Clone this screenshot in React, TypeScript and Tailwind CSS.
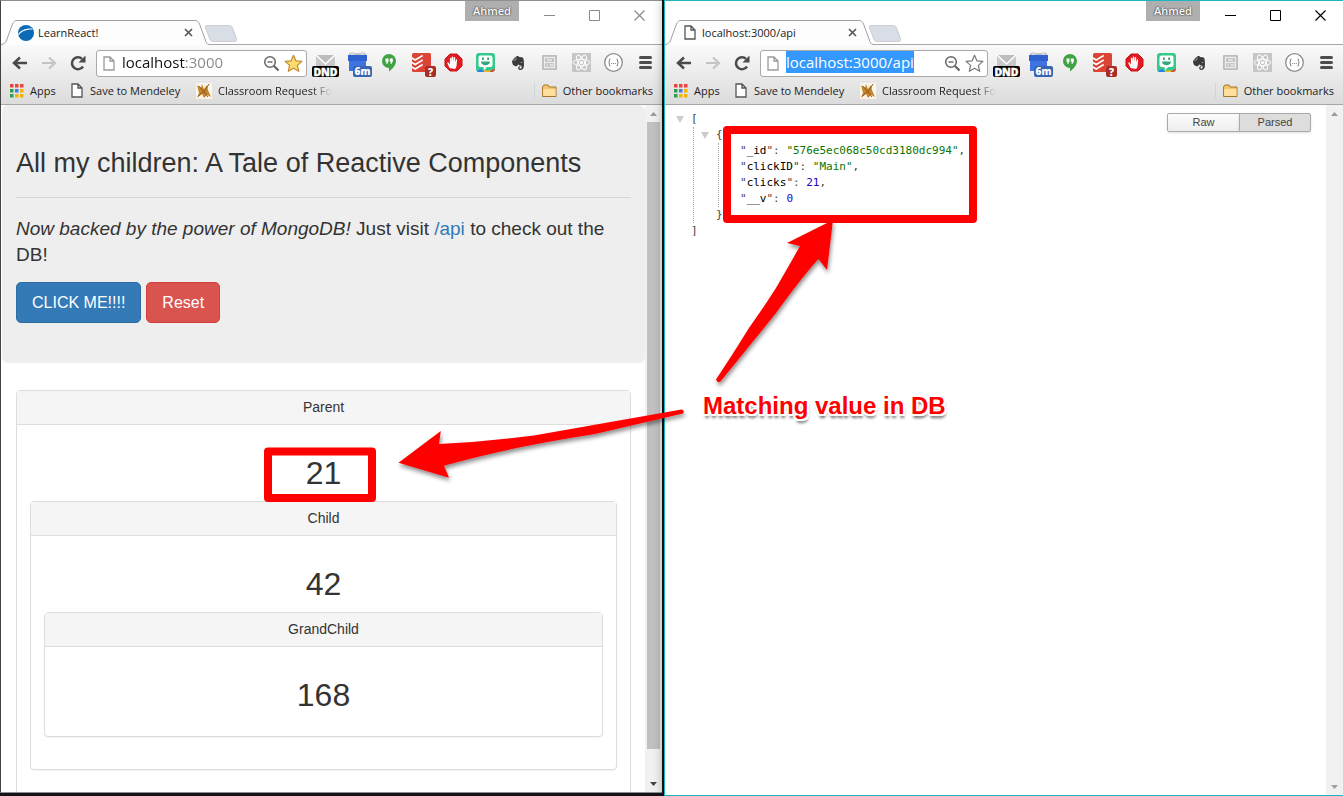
import React from "react";
import { FaEvernote } from "react-icons/fa";

const uiFont = "font-['Open_Sans','Noto_Sans',sans-serif]";
const pageFont = "font-['Liberation_Sans',Arial,sans-serif]";

function PageIcon({ light = false }: { light?: boolean }) {
  return (
    <svg width="12" height="15" viewBox="0 0 12 15" className="shrink-0" aria-hidden="true">
      <path
        d="M1 1h6l4 4v9H1z M7 1v4h4"
        fill="#fff"
        stroke={light ? "#9a9a9a" : "#555"}
        strokeWidth="1.3"
      />
    </svg>
  );
}

function SiteIcon() {
  return (
    <svg width="16" height="16" viewBox="0 0 16 16" className="shrink-0" aria-hidden="true">
      <circle cx="8" cy="8" r="8" fill="#0b6ab5" />
      <path d="M.5 10.500C3 6.500 8 4.200 14.500 4.500L13.800 3.600C8 3 3 5.200 .2 9z" fill="#fff" />
    </svg>
  );
}

function TitleBar({
  title,
  icon,
  active,
}: {
  title: string;
  icon: React.ReactNode;
  active: boolean;
}) {
  const stroke = active ? "#000" : "#8a8a8a";
  return (
    <header className="flex h-11 shrink-0 items-end border-b border-[#a6a6a6] bg-white">
      <div className="relative -mb-px flex h-[25px] w-[208px] shrink-0 items-center">
        <svg
          className="absolute inset-0"
          width="208"
          height="25"
          viewBox="0 0 208 25"
          aria-hidden="true"
        >
          <path
            d="M0 24.500C4 24 5 22 6 19L11.500 4C12.500 1.500 14 .5 16 .5H194C196 .5 197.500 1.500 198.500 4L204 19C205 22 205.500 24 208 24.500V25H0z"
            fill="#fdfdfd"
          />
          <path
            d="M0 24.500C4 24 5 22 6 19L11.500 4C12.500 1.500 14 .5 16 .5H194C196 .5 197.500 1.500 198.500 4L204 19C205 22 205.500 24 208 24.500"
            fill="none"
            stroke="#a0a0a0"
          />
        </svg>
        <div className="relative flex w-full items-center pr-3 pl-3.5">
          <span className="mr-px flex w-[22px] items-center justify-center">{icon}</span>
          <span className="flex-1 text-[11px] leading-4 whitespace-nowrap text-[#222]">
            {title}
          </span>
          <button aria-label="Close tab" className="p-1">
            <svg width="9" height="9" viewBox="0 0 9 9">
              <path d="M1 1l7 7M8 1l-7 7" stroke="#555" strokeWidth="1.600" />
            </svg>
          </button>
        </div>
      </div>
      <button aria-label="New tab" className="mb-0.5 -ml-[5px]">
        <svg width="34" height="17" viewBox="0 0 34 17">
          <path
            d="M2.500 .5H25C27 .5 28 1.500 28.500 3L32.500 13.500C33 15.500 32 16.500 30.500 16.500H9C7.500 16.500 6.500 15.500 6 14.500L1.500 3C1 1.500 1 .5 2.500 .5z"
            fill="#d8dde6"
            stroke="#cbcdd2"
          />
        </svg>
      </button>
      <div className="ml-auto flex items-start self-start pr-[7px]">
        <button className="h-5 w-[54px] bg-[#afafaf] text-[11px] leading-5 font-semibold text-white [text-shadow:0_0_2px_#333,0_0_1px_#333]">
          Ahmed
        </button>
        <button aria-label="Minimize" className="flex h-7 w-[46px] items-center justify-center pl-3.5">
          <svg width="11" height="11" viewBox="0 0 11 11">
            <path d="M0 5.500h11" stroke={stroke} />
          </svg>
        </button>
        <button aria-label="Maximize" className="flex h-7 w-[45px] items-center justify-center pl-3.5">
          <svg width="11" height="11" viewBox="0 0 11 11">
            <path d="M.5 .5h10v10H.5z" fill="none" stroke={stroke} />
          </svg>
        </button>
        <button aria-label="Close" className="flex h-7 w-[45px] items-center justify-center pl-3.5">
          <svg width="11" height="11" viewBox="0 0 11 11">
            <path d="M.5 .5l10 10M10.500 .5l-10 10" stroke={stroke} strokeWidth="1.200" />
          </svg>
        </button>
      </div>
    </header>
  );
}

const badgeText = {
  fill: "#fff",
  fontWeight: 900,
  fontFamily: "'Open Sans', sans-serif",
  textAnchor: "middle" as const,
};

const extensions: { name: string; art: React.ReactNode }[] = [
  {
    name: "Do not disturb",
    art: (
      <>
        <path d="M7 8h19v12H7z" fill="#c9c9c9" />
        <path d="M7 8l9.500 9L26 8" fill="#bdbdbd" stroke="#fff" strokeWidth="1.600" />
        <rect x="3" y="19" width="27" height="11" rx="2" fill="#000" />
        <text x="16.500" y="28.500" fontSize="10.500" stroke="#fff" strokeWidth=".4" {...badgeText}>
          DND
        </text>
      </>
    ),
  },
  {
    name: "Calendar",
    art: (
      <>
        <path d="M8 6h17v3H8z" fill="#bfc3ca" />
        <path d="M10 5h3v3h-3zM20 5h3v3h-3z" fill="#d8d8d8" />
        <path d="M7 8h19v6H7z" fill="#2f62d0" />
        <path d="M8 14h17v10H8z" fill="#3f74e0" />
        <rect x="12" y="19" width="19" height="11" rx="2" fill="#3765b3" />
        <text x="21.500" y="28" fontSize="10" {...badgeText}>
          6m
        </text>
      </>
    ),
  },
  {
    name: "Hangouts",
    art: (
      <>
        <path d="M16 7a7 7 0 0 1 7 7c0 4-3.500 8-7 10.500V21a7 7 0 0 1 0-14z" fill="#41a343" />
        <path
          d="M12.500 11.500h3v3l-1.200 2.200h-1.300l.7-2h-1.200zM16.800 11.500h3v3l-1.200 2.200h-1.300l.7-2h-1.200z"
          fill="#fff"
        />
      </>
    ),
  },
  {
    name: "Todoist",
    art: (
      <>
        <rect x="7" y="6" width="19" height="19" rx="1.500" fill="#dc4436" />
        <path
          d="M7 11l3.200 2 7.500-4.500M7 15.500l3.200 2 7.500-4.500M7 20l3.200 2 7.500-4.500"
          fill="none"
          stroke="#fff"
          strokeWidth="1.500"
        />
        <rect x="20" y="19" width="11" height="11" rx="2" fill="#a92c25" />
        <text x="25.500" y="28.500" fontSize="10" {...badgeText}>
          ?
        </text>
      </>
    ),
  },
  {
    name: "AdBlock",
    art: (
      <>
        <path d="M13 7h7l5 5v7l-5 5h-7l-5-5v-7z" fill="#e01b22" stroke="#c7141b" />
        <path
          d="M12.600 21c-.8-1.600-1.800-3.300-2.300-5 0-.8 1.100-.9 1.500-.1l1.100 1.900v-6.300c0-.9 1.300-.9 1.400 0l.2 3.500.2-4.900c0-.9 1.400-.9 1.500 0l.1 4.900.5-4.400c.1-.8 1.400-.7 1.400.1l-.1 4.700.8-2.700c.3-.8 1.300-.5 1.200.3l-.5 5.500c-.2 1.600-.8 2.500-1.500 3.500z"
          fill="#fff"
        />
      </>
    ),
  },
  {
    name: "Bitmoji",
    art: (
      <>
        <rect x="7" y="6" width="19" height="19" rx="3" fill="#35c98c" />
        <path d="M8 24l4-2 3 3H9z" fill="#2d7bf0" />
        <path d="M15 23.500h6L23 25h-8z" fill="#f7b916" />
        <path d="M21 24l4.800-2.500V23L24 25h-3z" fill="#e34b37" />
        <path
          d="M11.500 8.500h10a2 2 0 0 1 2 2v7.500a2 2 0 0 1-2 2h-3.500l-3 3.500-.5-3.500h-3a2 2 0 0 1-2-2v-7.500a2 2 0 0 1 2-2z"
          fill="#fff"
        />
        <path
          d="M12 14.500h9c0 5-9 5-9 0zM13 10.500h1.800v2.500H13zM18.200 10.500H20v2.500h-1.800z"
          fill="#35a877"
        />
      </>
    ),
  },
  {
    name: "Evernote",
    art: <FaEvernote x={9} y={8} width={15} height={15} color="#3b3b3b" />,
  },
  {
    name: "Reader",
    art: (
      <>
        <rect x="9" y="8" width="15" height="15" rx="1" fill="#bdbdbd" />
        <path
          d="M11.500 10.500h10v10h-10zM11.500 15.500h10M14 13h5M13.500 18h1.500M16.500 18h4"
          fill="none"
          stroke="#ececec"
          strokeWidth="1.300"
        />
      </>
    ),
  },
  {
    name: "React Developer Tools",
    art: (
      <>
        <rect x="7" y="6" width="19" height="19" fill="#c6c6c6" />
        <g fill="none" stroke="#fff" strokeWidth="1">
          <ellipse cx="16.500" cy="15.500" rx="8.300" ry="3.200" />
          <ellipse cx="16.500" cy="15.500" rx="8.300" ry="3.200" transform="rotate(60 16.500 15.500)" />
          <ellipse cx="16.500" cy="15.500" rx="8.300" ry="3.200" transform="rotate(120 16.500 15.500)" />
        </g>
        <circle cx="16.500" cy="15.500" r="1.600" fill="#fff" />
      </>
    ),
  },
  {
    name: "JSON Formatter",
    art: (
      <>
        <circle cx="16.500" cy="15.500" r="8.800" fill="#fff" stroke="#8c8c8c" strokeWidth="1.300" />
        <path
          d="M13.500 12c-1.500 0-1 1-1 2s-.4 1.500-1.300 1.500c.9 0 1.300.5 1.300 1.500s-.5 2 1 2M19.500 12c1.500 0 1 1 1 2s.4 1.500 1.300 1.500c-.9 0-1.300.5-1.300 1.500s.5 2-1 2M14.200 16.500h1M16 16.500h1M17.800 16.500h1"
          fill="none"
          stroke="#8c8c8c"
          strokeWidth="1.100"
        />
      </>
    ),
  },
  {
    name: "Menu",
    art: (
      <path
        d="M11.500 10.500h10M11.500 15.500h10M11.500 20.500h10"
        stroke="#4d4d4d"
        strokeWidth="3"
        strokeLinecap="round"
      />
    ),
  },
];

function Toolbar({ url, selected = false }: { url: string; selected?: boolean }) {
  return (
    <div className="flex h-9 items-center pl-[7px]">
      <button aria-label="Back" className="flex w-6 justify-center">
        <svg width="16" height="14" viewBox="0 0 16 14">
          <path d="M8 1.500L2 7l6 5.500M2.500 7H15" fill="none" stroke="#4a4a4a" strokeWidth="2.500" />
        </svg>
      </button>
      <button aria-label="Forward" className="ml-[5px] flex w-6 justify-center">
        <svg width="16" height="14" viewBox="0 0 16 14">
          <path d="M8 1.500L14 7l-6 5.500M13.500 7H1" fill="none" stroke="#c4c4c4" strokeWidth="2.200" />
        </svg>
      </button>
      <button aria-label="Reload" className="ml-[5px] flex w-6 justify-center">
        <svg width="16" height="16" viewBox="0 0 16 16">
          <path d="M13 11.500A6 6 0 1 1 12 3.800" fill="none" stroke="#4a4a4a" strokeWidth="2.500" />
          <path d="M15.500 .5v7h-7z" fill="#4a4a4a" />
        </svg>
      </button>
      <div className="ml-1.5 flex h-[27px] min-w-0 flex-1 items-center rounded-[3px] border border-[#a9a9a9] bg-white pr-[3px] pl-1.5">
        <PageIcon light />
        <div className="ml-[7px] flex min-w-0 flex-1 pb-0.5">
          {selected ? (
            <input
              aria-label="Address"
              defaultValue={url}
              className="field-sizing-content h-[22px] bg-[#3399ff] text-[15px] leading-5 text-white outline-none"
            />
          ) : (
            <input
              aria-label="Address"
              defaultValue={url}
              className="h-[22px] w-full min-w-0 bg-[linear-gradient(90deg,#111_64px,#888_64px)] bg-clip-text text-[15px] leading-5 text-transparent outline-none"
            />
          )}
        </div>
        <button aria-label="Zoom">
          <svg width="17" height="17" viewBox="0 0 17 17">
            <circle cx="7" cy="7" r="5.300" fill="none" stroke="#666" strokeWidth="1.500" />
            <path d="M4.500 7h5" stroke="#666" strokeWidth="1.400" />
            <path d="M11 11l4.500 4.500" stroke="#666" strokeWidth="2.300" />
          </svg>
        </button>
        <button aria-label="Bookmark this page" className="ml-1">
          <svg width="19" height="19" viewBox="0 0 19 19">
            <path
              d="M9.500 1.300l2.400 5.500 6 .6-4.500 4 1.300 5.900-5.200-3-5.200 3 1.300-5.900-4.500-4 6-.6z"
              fill={selected ? "#fff" : "#fddc6c"}
              stroke={selected ? "#777" : "#c08b35"}
              strokeWidth="1.200"
              strokeLinejoin="round"
            />
          </svg>
        </button>
      </div>
      <div className="ml-0.5 flex shrink-0 pr-px">
        {extensions.map((e) => (
          <button key={e.name} aria-label={e.name} className="size-8">
            <svg width="32" height="32" viewBox="0 0 32 32">
              {e.art}
            </svg>
          </button>
        ))}
      </div>
    </div>
  );
}

const appColors = [
  "#e8453c",
  "#e8453c",
  "#e8453c",
  "#2e9e4f",
  "#3b7ded",
  "#f5b400",
  "#2e9e4f",
  "#f5b400",
  "#f5b400",
];

function BookmarksBar() {
  return (
    <nav
      aria-label="Bookmarks"
      className="flex h-[23px] items-center pr-[9px] pb-1 pl-2 text-[11px] leading-4 text-[#1c1c1c]"
    >
      <a href="#apps" className="flex items-center gap-1.5">
        <svg width="15" height="15" viewBox="0 0 15 15" aria-hidden="true">
          {appColors.map((c, i) => (
            <rect
              key={i}
              x={1 + (i % 3) * 5}
              y={1 + Math.floor(i / 3) * 5}
              width="3.500"
              height="3.500"
              fill={c}
            />
          ))}
        </svg>
        <span className="w-[30px]">Apps</span>
      </a>
      <a href="#mendeley" className="ml-[11px] flex items-center gap-[7px]">
        <PageIcon />
        <span className="w-[95px] whitespace-nowrap">Save to Mendeley</span>
      </a>
      <a href="#classroom" className="ml-[11px] flex items-center gap-1.5">
        <svg width="16" height="16" viewBox="0 0 16 16" aria-hidden="true">
          <path d="M0 0h16v16H0z" fill="#fbf6ec" />
          <path d="M1 2l4 3 1-4 2 5 3-4 1 5 3 7-4-2-3 3-2-4-5 4 2-5z" fill="#c8862c" />
          <path d="M3 3l9 11M13 1L8 9M2 13l5-4" stroke="#8c5a1e" strokeWidth="1" />
        </svg>
        <span className="whitespace-nowrap [mask-image:linear-gradient(90deg,#000_82%,transparent)]">
          Classroom Request Fo
        </span>
      </a>
      <a
        href="#other"
        className="ml-auto flex items-center gap-1.5 border-l border-[#cfd4d8] pl-[7px] whitespace-nowrap"
      >
        <svg width="15" height="14" viewBox="0 0 15 14" aria-hidden="true">
          <path d="M.6 12.500V2.500L2 1h4l1.200 2H14v9.500z" fill="#f3c46c" stroke="#a8742a" />
          <path d="M1.200 5h12.300v7H1.200z" fill="#ffdf9e" />
        </svg>
        <span>Other bookmarks</span>
      </a>
    </nav>
  );
}

function Chrome({
  title,
  icon,
  url,
  active = false,
}: {
  title: string;
  icon: React.ReactNode;
  url: string;
  active?: boolean;
}) {
  return (
    <div className={`${uiFont} shrink-0`}>
      <TitleBar title={title} icon={icon} active={active} />
      <div className="border-b border-[#a6a6a6] bg-linear-to-b from-[#fafafa] to-[#dcdcdc]">
        <Toolbar url={url} selected={active} />
        <BookmarksBar />
      </div>
    </div>
  );
}

function Scrollbar({ thumb = false }: { thumb?: boolean }) {
  return (
    <div aria-hidden="true" className="flex w-[17px] shrink-0 flex-col items-center bg-[#f1f1f1]">
      <svg width="17" height="17" viewBox="0 0 17 17" className="shrink-0">
        <path d="M5 11h7L8.500 7z" fill="#9a9a9a" />
      </svg>
      <div className="flex min-h-0 w-full flex-1 flex-col px-0.5">
        {thumb && <div className="h-[96%] bg-[#c1c1c1]" />}
      </div>
      <svg width="17" height="17" viewBox="0 0 17 17" className="shrink-0">
        <path d="M5 7h7l-3.500 4z" fill={thumb ? "#444" : "#a0a0a0"} />
      </svg>
    </div>
  );
}

function Panel({
  title,
  value,
  children,
}: {
  title: string;
  value: number;
  children?: React.ReactNode;
}) {
  return (
    <section className="rounded-[4px] border border-[#ddd] bg-white text-center shadow-[0_1px_1px_rgba(0,0,0,0.05)]">
      <h3 className="border-b border-[#ddd] bg-[#f5f5f5] py-1.5 text-sm leading-[21px]">{title}</h3>
      <div className={`px-[13px] pt-[30px] ${children ? "pb-8" : "pb-[23px]"}`}>
        <p className={`text-[32px] leading-9 ${children ? "mb-2.5" : ""}`}>{value}</p>
        {children}
      </div>
    </section>
  );
}

function LearnReact() {
  return (
    <main className={`${pageFont} min-w-0 flex-1 overflow-hidden text-[#333]`}>
      <div className="rounded-md bg-[#eee] px-3.5 pt-[43px] pb-10">
        <h1 className="text-[27px] leading-[30px]">All my children: A Tale of Reactive Components</h1>
        <hr className="mt-[19px] mb-[18px] border-[#d5d5d5]" />
        <p className="text-[19px] leading-[26px]">
          <em>Now backed by the power of MongoDB!</em> Just visit{" "}
          <a href="/api" className="text-[#337ab7]">
            /api
          </a>{" "}
          to check out the DB!
        </p>
        <div className="mt-3.5 flex gap-[5px] text-base leading-[21px] text-white">
          <button className="rounded-[5px] border border-[#2e6da4] bg-[#337ab7] px-[15px] py-[9px]">
            CLICK ME!!!!
          </button>
          <button className="rounded-[5px] border border-[#d43f3a] bg-[#d9534f] px-[15px] py-[9px]">
            Reset
          </button>
        </div>
      </div>
      <div className="px-3.5 pt-[27px]">
        <Panel title="Parent" value={21}>
          <Panel title="Child" value={42}>
            <Panel title="GrandChild" value={168} />
          </Panel>
        </Panel>
      </div>
    </main>
  );
}

function Toggle() {
  return (
    <button aria-label="Collapse" className="absolute top-[5px] -left-[15px]">
      <svg width="8" height="7" viewBox="0 0 8 7">
        <path d="M0 0h8L4 7z" fill="#ccc" />
      </svg>
    </button>
  );
}

const fields: { key: string; value: string; tone: string }[] = [
  { key: "_id", value: '"576e5ec068c50cd3180dc994"', tone: "text-[#0b7500]" },
  { key: "clickID", value: '"Main"', tone: "text-[#0b7500]" },
  { key: "clicks", value: "21", tone: "text-[#1a01cc]" },
  { key: "__v", value: "0", tone: "text-[#1a01cc]" },
];

function ApiResponse() {
  return (
    <main className="flex min-w-0 flex-1 items-start justify-between bg-white pr-[15px]">
      <div className="pt-1.5 pl-[26px] font-['DejaVu_Sans_Mono',monospace] text-[11px] leading-4 text-[#444]">
        <div className="relative">
          <Toggle />[
        </div>
        <div className="ml-0.5 border-l border-dotted border-[#aaa] pl-[22px]">
          <div className="relative">
            <Toggle />
            {"{"}
          </div>
          <ul className="ml-0.5 border-l border-dotted border-[#aaa] pl-[21px]">
            {fields.map((f, i) => (
              <li key={f.key}>
                "<span className="text-black">{f.key}</span>": <span className={f.tone}>{f.value}</span>
                {i < fields.length - 1 && ","}
              </li>
            ))}
          </ul>
          <div>{"}"}</div>
        </div>
        <div>]</div>
      </div>
      <div className={`${pageFont} mt-2 flex text-[11px] leading-[17px] text-[#444]`}>
        <button className="w-[73px] rounded-l-[2px] border border-[#aaa] bg-linear-to-b from-[#fbfbfb] to-[#eee] shadow-sm">
          Raw
        </button>
        <button className="-ml-px w-[72px] rounded-r-[2px] border border-[#aaa] bg-[#ddd] shadow-sm">
          Parsed
        </button>
      </div>
    </main>
  );
}

function Annotations() {
  return (
    <div className="pointer-events-none absolute inset-0 z-20">
      <svg
        width="1343"
        height="796"
        viewBox="0 0 1343 796"
        className="absolute top-0 left-0"
        aria-hidden="true"
      >
        <defs>
          <filter id="drop" x="-10%" y="-10%" width="120%" height="120%">
            <feDropShadow dx="1" dy="3" stdDeviation="2" floodColor="#000" floodOpacity=".45" />
          </filter>
        </defs>
        <g fill="none" stroke="#f00" strokeWidth="8" strokeLinejoin="round">
          <rect x="727" y="130" width="246" height="89" />
          <rect x="268" y="451.500" width="104" height="46.500" />
        </g>
        <g fill="#f00" filter="url(#drop)">
          <path d="M833 220L827 270L818.500 259Q802 277 776 313L720.500 381.500Q717.500 383.500 716 379.500Q733 354 749 328Q764 307 776 288Q790 264 800 246L787 243z" />
          <path d="M398.500 462.700L440.800 431L439 444Q486 441.500 534 435.500L681.500 409.500Q685 410.500 683 413.500L595 434Q510 447 444 465.700L449 477.700z" />
        </g>
      </svg>
      <p className="absolute top-[392px] left-[703px] font-['Liberation_Sans',Arial,sans-serif] text-2xl leading-7 font-bold whitespace-nowrap text-[#f00] [text-shadow:-2px_0_0_#fff,2px_0_0_#fff,0_-2px_0_#fff,0_2px_0_#fff,-1px_-1px_0_#fff,1px_-1px_0_#fff,-1px_2px_0_#fff,2px_2px_0_#fff,1px_4px_3px_rgba(0,0,0,0.6)]">
        Matching value in DB
      </p>
    </div>
  );
}

export default function App() {
  return (
    <div className="relative grid h-screen grid-cols-[662fr_679fr] gap-x-0.5 overflow-hidden bg-[#15131a]">
      <div className="mb-[3px] flex min-h-0 min-w-0 flex-col border border-r-0 border-[#8f8f8f] border-l-[#444] bg-white">
        <Chrome title="LearnReact!" icon={<SiteIcon />} url="localhost:3000" />
        <div className="flex min-h-0 flex-1 pl-px">
          <LearnReact />
          <Scrollbar thumb />
        </div>
      </div>
      <div className="z-10 flex min-h-0 min-w-0 flex-col border border-r-0 border-[#1cb5c0] bg-white shadow-[0_0_10px_rgba(0,0,0,0.4)]">
        <Chrome title="localhost:3000/api" icon={<PageIcon />} url="localhost:3000/api" active />
        <div className="flex min-h-0 flex-1">
          <ApiResponse />
          <Scrollbar />
        </div>
      </div>
      <Annotations />
    </div>
  );
}
